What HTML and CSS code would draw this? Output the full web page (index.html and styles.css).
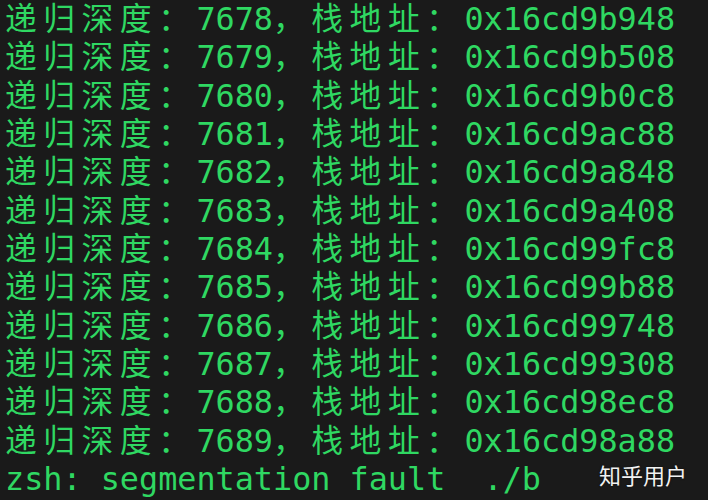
FILE: index.html
```html
<!DOCTYPE html>
<html lang="zh-CN">
<head>
<meta charset="utf-8">
<title>segfault</title>
<link rel="stylesheet" href="styles.css">
</head>
<body>
<div class="term">
  <div class="line"><span class="cjk">递归深度：</span>7678<span class="cjk">，栈地址：</span>0x16cd9b948</div>
  <div class="line"><span class="cjk">递归深度：</span>7679<span class="cjk">，栈地址：</span>0x16cd9b508</div>
  <div class="line"><span class="cjk">递归深度：</span>7680<span class="cjk">，栈地址：</span>0x16cd9b0c8</div>
  <div class="line"><span class="cjk">递归深度：</span>7681<span class="cjk">，栈地址：</span>0x16cd9ac88</div>
  <div class="line"><span class="cjk">递归深度：</span>7682<span class="cjk">，栈地址：</span>0x16cd9a848</div>
  <div class="line"><span class="cjk">递归深度：</span>7683<span class="cjk">，栈地址：</span>0x16cd9a408</div>
  <div class="line"><span class="cjk">递归深度：</span>7684<span class="cjk">，栈地址：</span>0x16cd99fc8</div>
  <div class="line"><span class="cjk">递归深度：</span>7685<span class="cjk">，栈地址：</span>0x16cd99b88</div>
  <div class="line"><span class="cjk">递归深度：</span>7686<span class="cjk">，栈地址：</span>0x16cd99748</div>
  <div class="line"><span class="cjk">递归深度：</span>7687<span class="cjk">，栈地址：</span>0x16cd99308</div>
  <div class="line"><span class="cjk">递归深度：</span>7688<span class="cjk">，栈地址：</span>0x16cd98ec8</div>
  <div class="line"><span class="cjk">递归深度：</span>7689<span class="cjk">，栈地址：</span>0x16cd98a88</div>
  <div class="line">zsh: segmentation fault  ./b</div>
</div>
<div class="watermark">知乎用户</div>
</body>
</html>
```
FILE: styles.css
```css
html, body {
  margin: 0;
  padding: 0;
  background: #1a1a1a;
  width: 708px;
  height: 500px;
  overflow: hidden;
}
body {
  position: relative;
}
.term {
  padding: 0 0 0 5px;
  color: #2fd862;
  font-family: "DejaVu Sans Mono", monospace;
  font-size: 31.8px;
  line-height: 38.33px;
}
.line {
  height: 38.33px;
  white-space: pre;
}
.cjk {
  font-family: "Noto Sans CJK SC", sans-serif;
  letter-spacing: 6.49px;
  line-height: 1;
}
.watermark {
  position: absolute;
  left: 599px;
  top: 463px;
  font-family: "Noto Sans CJK SC", sans-serif;
  font-size: 22px;
  line-height: 22px;
  color: #f2f2f2;
  text-shadow: 0 0 2px rgba(0,0,0,0.6);
}
```
